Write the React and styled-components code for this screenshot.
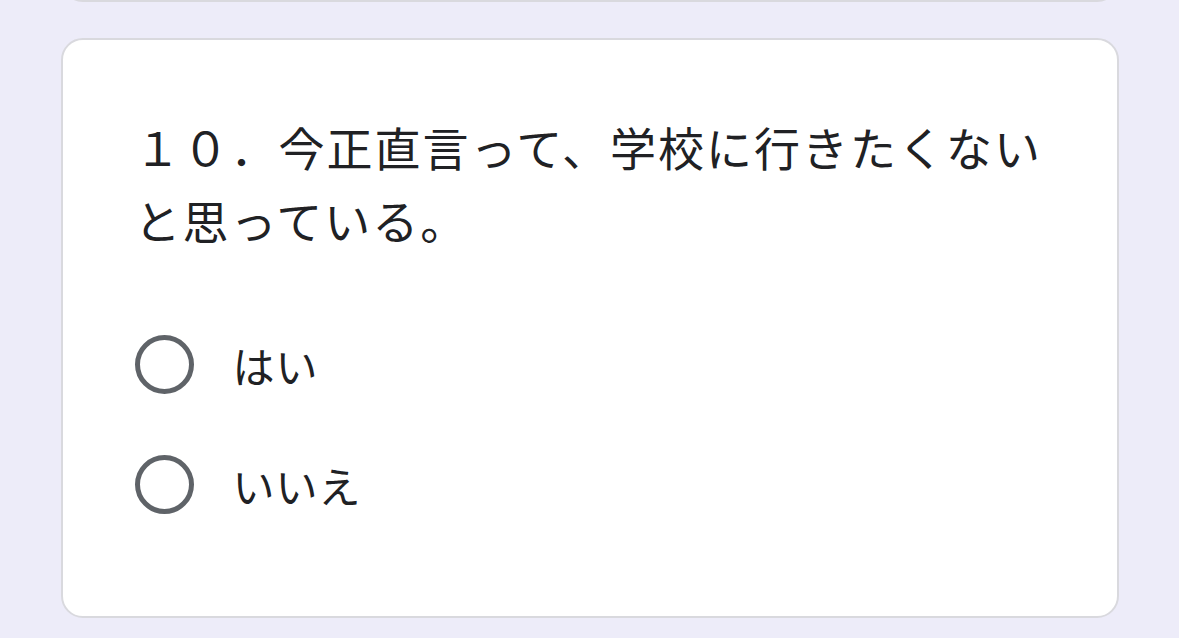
import React from 'react';
import styled, { createGlobalStyle } from 'styled-components';

const GlobalStyle = createGlobalStyle`
  html, body {
    margin: 0;
    padding: 0;
    background: #edecf9;
  }
  body {
    font-family: "Noto Sans CJK JP", "Noto Sans", sans-serif;
    color: #202124;
  }
`;

const Page = styled.div`
  width: 1179px;
  height: 638px;
  overflow: hidden;
  display: flex;
  flex-direction: column;
  align-items: center;
  gap: 36px;
  background: #edecf9;
`;

const Card = styled.div`
  box-sizing: border-box;
  width: 1058px;
  background: #ffffff;
  border: 2px solid #d9d9de;
  border-radius: 22px;
`;

const PrevCard = styled(Card)`
  height: 60px;
  margin-top: -58px;
  flex-shrink: 0;
`;

const QuestionCard = styled(Card)`
  height: 580px;
  padding: 70px 70px 0 72px;
  flex-shrink: 0;
`;

const Question = styled.div`
  font-size: 46px;
  line-height: 73px;
  letter-spacing: 2px;
  margin: 0 0 78px;
`;

const Options = styled.div`
  display: flex;
  flex-direction: column;
  gap: 60px;
`;

const Option = styled.label`
  display: flex;
  align-items: center;
  gap: 39px;
  height: 60px;
`;

const Radio = styled.span`
  box-sizing: border-box;
  width: 59px;
  height: 59px;
  border-radius: 50%;
  border: 5.5px solid #5f6368;
  flex-shrink: 0;
`;

const OptionText = styled.span`
  font-size: 42px;
  letter-spacing: 1px;
`;

export default function App() {
  return (
    <>
      <GlobalStyle />
      <Page>
        <PrevCard />
        <QuestionCard>
          <Question>１０．今正直言って、学校に行きたくないと思っている。</Question>
          <Options>
            <Option>
              <Radio />
              <OptionText>はい</OptionText>
            </Option>
            <Option>
              <Radio />
              <OptionText>いいえ</OptionText>
            </Option>
          </Options>
        </QuestionCard>
      </Page>
    </>
  );
}
